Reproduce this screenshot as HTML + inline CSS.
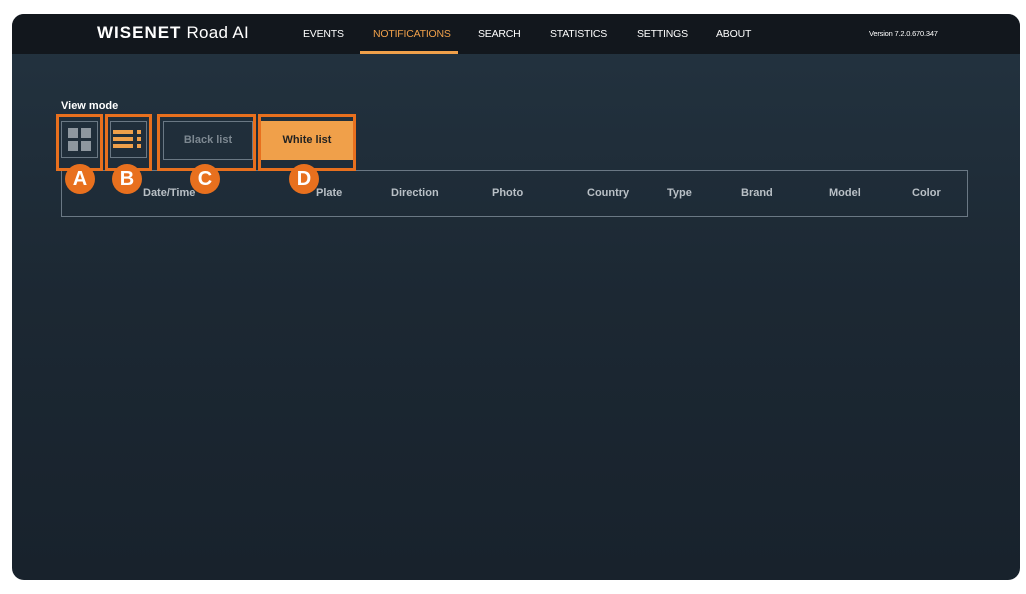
<!DOCTYPE html>
<html><head><meta charset="utf-8"><style>
body{margin:0;width:1026px;height:594px;background:#fff;position:relative;overflow:hidden;font-family:"Liberation Sans",sans-serif}
.frame{position:absolute;left:12px;top:14px;width:1008px;height:566px;border-radius:12px;overflow:hidden;background:linear-gradient(180deg,#233340 0%,#1c2833 50%,#18222c 100%)}
.hdr{position:absolute;left:0;top:0;width:100%;height:40px;background:#12171d}
.logo{position:absolute;left:85px;top:9px;color:#fff;font-size:17px;letter-spacing:0.3px}
.nav{position:absolute;top:14px;color:#fff;font-size:10.5px;letter-spacing:-0.2px}
.abs{position:absolute}
.hl{position:absolute;border:3px solid #e8701e;box-sizing:border-box}
.circ{position:absolute;width:30px;height:30px;border-radius:50%;background:#e8701e;color:#fff;font-weight:bold;font-size:20px;text-align:center;line-height:30px}
.th{position:absolute;top:187px;color:#b9c0c6;font-size:11px;font-weight:bold}
</style></head><body>
<div class="frame">
<div class="hdr">
<div class="logo"><b style="letter-spacing:1px">WISENET</b> Road AI</div>
<div class="nav" style="left:291px">EVENTS</div>
<div class="nav" style="left:361px;color:#f0a04a">NOTIFICATIONS</div>
<div class="abs" style="left:348px;top:37px;width:98px;height:3px;background:#f0a04a"></div>
<div class="nav" style="left:466px">SEARCH</div>
<div class="nav" style="left:538px">STATISTICS</div>
<div class="nav" style="left:625px">SETTINGS</div>
<div class="nav" style="left:704px">ABOUT</div>
<div class="nav" style="left:857px;font-size:7.5px;top:15px">Version 7.2.0.670.347</div>
</div>
</div>
<div class="abs" style="left:61px;top:100px;color:#fff;font-size:11px;font-weight:bold">View mode</div>
<div class="abs" style="left:61px;top:121px;width:37px;height:37px;border:1px solid #6a7884;box-sizing:border-box"></div>
<div class="abs" style="left:68px;top:128px;width:10px;height:10px;background:#8e979f"></div>
<div class="abs" style="left:81px;top:128px;width:10px;height:10px;background:#8e979f"></div>
<div class="abs" style="left:68px;top:141px;width:10px;height:10px;background:#8e979f"></div>
<div class="abs" style="left:81px;top:141px;width:10px;height:10px;background:#8e979f"></div>
<div class="abs" style="left:110px;top:121px;width:37px;height:37px;border:1px solid #6a7884;box-sizing:border-box"></div>
<div class="abs" style="left:113px;top:130px;width:20px;height:4px;background:#f0a04a;box-shadow:0 7px 0 #f0a04a,0 14px 0 #f0a04a"></div>
<div class="abs" style="left:137px;top:130px;width:4px;height:4px;background:#f0a04a;box-shadow:0 7px 0 #f0a04a,0 14px 0 #f0a04a"></div>
<div class="abs" style="left:163px;top:121px;width:90px;height:39px;border:1px solid #6a7884;box-sizing:border-box;color:#7d8891;font-size:11px;font-weight:bold;text-align:center;line-height:37px">Black list</div>
<div class="abs" style="left:261px;top:121px;width:92px;height:39px;background:#f0a04a;color:#222;font-size:11px;font-weight:bold;text-align:center;line-height:39px">White list</div>
<div class="abs" style="left:61px;top:170px;width:907px;height:47px;border:1px solid #6a7884;box-sizing:border-box"></div>
<div class="th" style="left:143px">Date/Time</div>
<div class="th" style="left:316px">Plate</div>
<div class="th" style="left:391px">Direction</div>
<div class="th" style="left:492px">Photo</div>
<div class="th" style="left:587px">Country</div>
<div class="th" style="left:667px">Type</div>
<div class="th" style="left:741px">Brand</div>
<div class="th" style="left:829px">Model</div>
<div class="th" style="left:912px">Color</div>
<div class="hl" style="left:56px;top:114px;width:47px;height:57px"></div>
<div class="hl" style="left:105px;top:114px;width:47px;height:57px"></div>
<div class="hl" style="left:157px;top:114px;width:99px;height:57px"></div>
<div class="hl" style="left:258px;top:114px;width:98px;height:57px"></div>
<div class="circ" style="left:65px;top:164px">A</div>
<div class="circ" style="left:112px;top:164px">B</div>
<div class="circ" style="left:190px;top:164px">C</div>
<div class="circ" style="left:289px;top:164px">D</div>
</body></html>
